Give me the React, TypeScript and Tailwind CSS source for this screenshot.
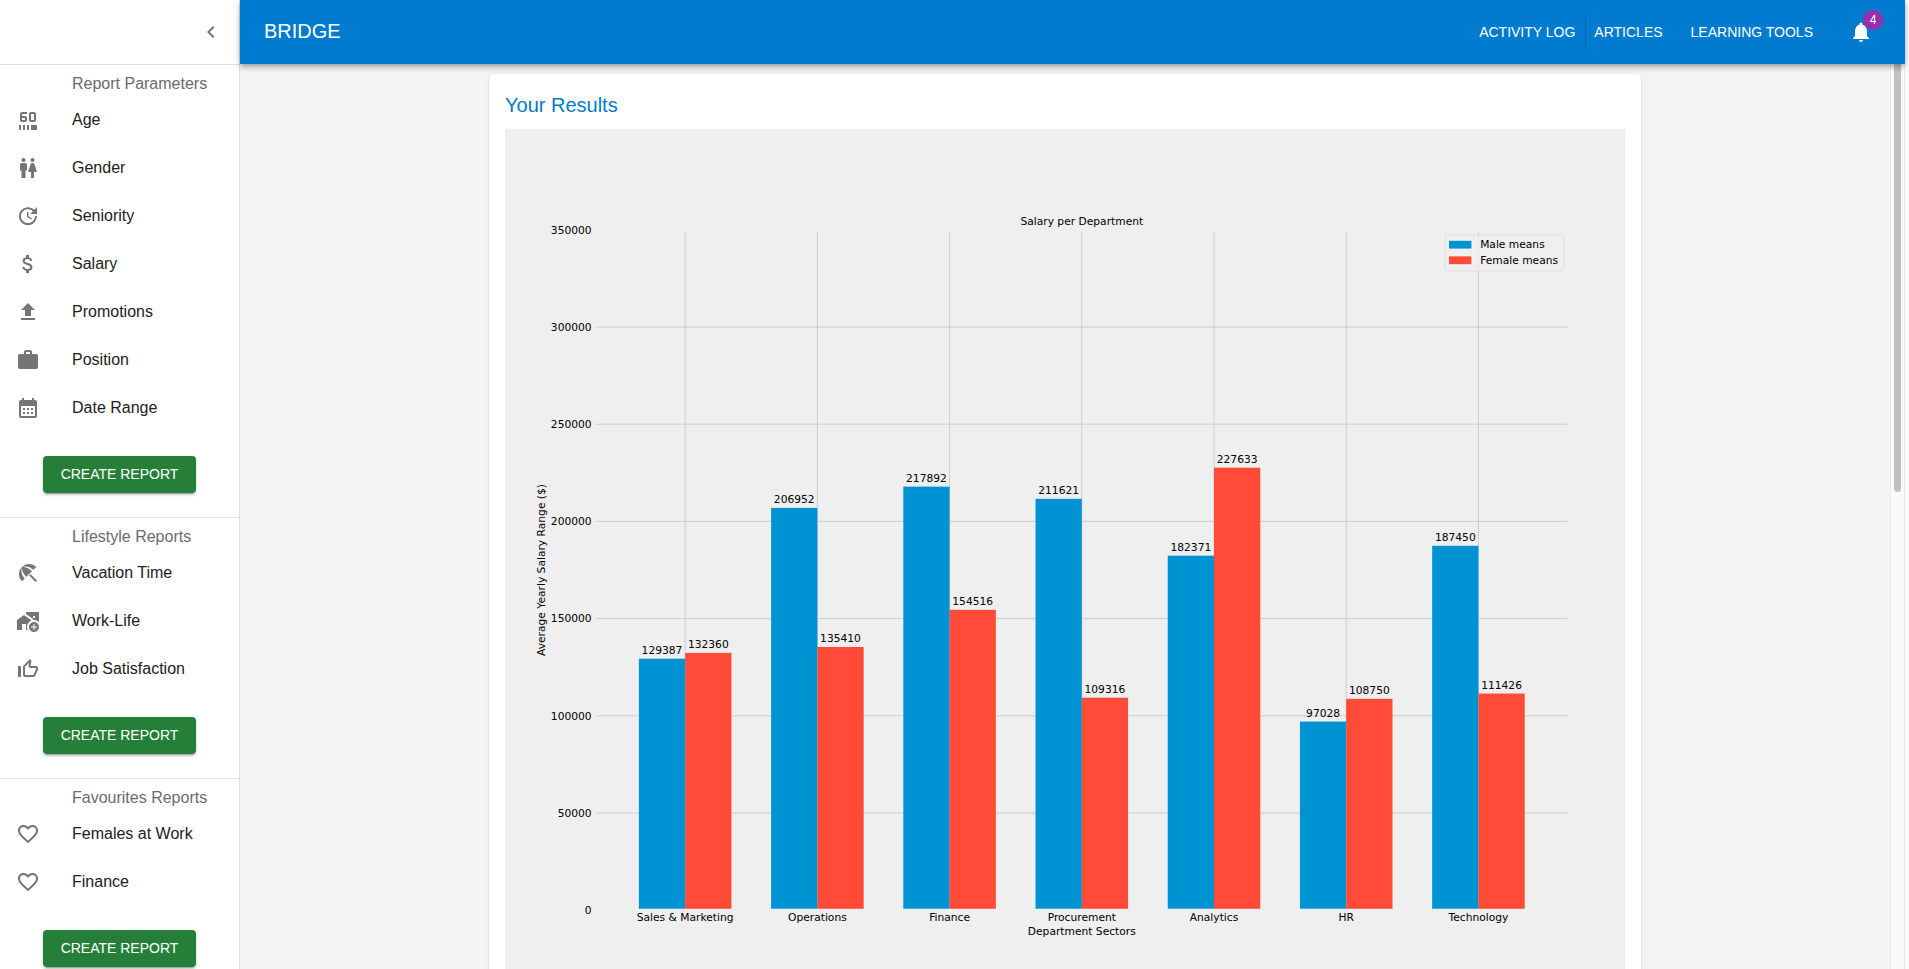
import React from "react";
import { IconType } from "react-icons";
import {
    Md60FpsSelect,
    MdAddHomeWork,
    MdAttachMoney,
    MdBeachAccess,
    MdCalendarMonth,
    MdChevronLeft,
    MdFavoriteBorder,
    MdFileUpload,
    MdNotifications,
    MdThumbUpOffAlt,
    MdUpdate,
    MdWc,
    MdWork,
} from "react-icons/md";

interface ReportItem {
    label: string;
    icon: IconType;
}

interface ReportSection {
    title: string;
    items: ReportItem[];
}

interface Department {
    name: string;
    male: number;
    female: number;
}

const sections: ReportSection[] = [
    {
        title: "Report Parameters",
        items: [
            { label: "Age", icon: Md60FpsSelect },
            { label: "Gender", icon: MdWc },
            { label: "Seniority", icon: MdUpdate },
            { label: "Salary", icon: MdAttachMoney },
            { label: "Promotions", icon: MdFileUpload },
            { label: "Position", icon: MdWork },
            { label: "Date Range", icon: MdCalendarMonth },
        ],
    },
    {
        title: "Lifestyle Reports",
        items: [
            { label: "Vacation Time", icon: MdBeachAccess },
            { label: "Work-Life", icon: MdAddHomeWork },
            { label: "Job Satisfaction", icon: MdThumbUpOffAlt },
        ],
    },
    {
        title: "Favourites Reports",
        items: [
            { label: "Females at Work", icon: MdFavoriteBorder },
            { label: "Finance", icon: MdFavoriteBorder },
        ],
    },
];

const departments: Department[] = [
    { name: "Sales & Marketing", male: 129387, female: 132360 },
    { name: "Operations", male: 206952, female: 135410 },
    { name: "Finance", male: 217892, female: 154516 },
    { name: "Procurement", male: 211621, female: 109316 },
    { name: "Analytics", male: 182371, female: 227633 },
    { name: "HR", male: 97028, female: 108750 },
    { name: "Technology", male: 187450, female: 111426 },
];

const MALE = "#0093d3";
const FEMALE = "#ff4b37";
const GRID = "#cbcbcb";
const CHART_BG = "#efefef";

// Chart geometry, in points
const CHART_WIDTH = 1152;
const CHART_HEIGHT = 864;
const LEFT = CHART_WIDTH * 0.08;
const RIGHT = CHART_WIDTH * 0.95;
const TOP = CHART_HEIGHT * 0.12;
const BOTTOM = CHART_HEIGHT * 0.93;
const Y_MAX = 350000;
const BAR = 0.35;
const UNIT = (RIGHT - LEFT) / ((departments.length - 1 + BAR * 2) * 1.1);
const FIRST = (LEFT + RIGHT - UNIT * (departments.length - 1)) / 2;

const xAt = (index: number) => FIRST + index * UNIT;
const yAt = (value: number) => BOTTOM - (value / Y_MAX) * (BOTTOM - TOP);
const ticks = [0, 50000, 100000, 150000, 200000, 250000, 300000, 350000];

const Bar: React.FC<{ x: number; value: number; color: string }> = ({ x, value, color }) => (
    <g>
        <rect x={x} y={yAt(value)} width={BAR * UNIT} height={BOTTOM - yAt(value)} fill={color} />
        <text x={x + (BAR * UNIT) / 2} y={yAt(value) - 5} textAnchor="middle">
            {value}
        </text>
    </g>
);

const SalaryChart: React.FC = () => (
    <svg
        viewBox={`0 0 ${CHART_WIDTH} ${CHART_HEIGHT}`}
        className="block w-full font-['DejaVu_Sans',sans-serif]"
        fontSize={11}
        role="img"
        aria-labelledby="chart-title"
    >
        <rect width={CHART_WIDTH} height={CHART_HEIGHT} fill={CHART_BG} />

        {/* Grid */}
        {ticks.map((tick) => (
            <line key={tick} x1={LEFT} x2={RIGHT} y1={yAt(tick)} y2={yAt(tick)} stroke={GRID} />
        ))}
        {departments.map((department, i) => (
            <line key={department.name} x1={xAt(i)} x2={xAt(i)} y1={TOP} y2={BOTTOM} stroke={GRID} />
        ))}

        {departments.map((department, i) => (
            <g key={department.name}>
                <Bar x={xAt(i) - BAR * UNIT} value={department.male} color={MALE} />
                <Bar x={xAt(i)} value={department.female} color={FEMALE} />
                <text x={xAt(i)} y={815} textAnchor="middle">
                    {department.name}
                </text>
            </g>
        ))}
        <rect
            x={LEFT}
            y={TOP}
            width={RIGHT - LEFT}
            height={BOTTOM - TOP}
            fill="none"
            stroke={CHART_BG}
            strokeWidth={3}
        />

        {ticks.map((tick) => (
            <text key={tick} x={LEFT - 3} y={yAt(tick) + 4} textAnchor="end">
                {tick}
            </text>
        ))}
        <text id="chart-title" x={(LEFT + RIGHT) / 2} y={99} textAnchor="middle">
            Salary per Department
        </text>
        <text x={(LEFT + RIGHT) / 2} y={829} textAnchor="middle">
            Department Sectors
        </text>
        <text transform={`translate(41 ${(TOP + BOTTOM) / 2}) rotate(-90)`} textAnchor="middle">
            Average Yearly Salary Range ($)
        </text>

        {/* Legend */}
        <rect x={967} y={109} width={122} height={37} rx={2} fill={CHART_BG} fillOpacity={0.8} stroke="#dfdfdf" />
        <rect x={971} y={115} width={23} height={8} fill={MALE} />
        <text x={1003} y={122}>
            Male means
        </text>
        <rect x={971} y={131} width={23} height={8} fill={FEMALE} />
        <text x={1003} y={139}>
            Female means
        </text>
    </svg>
);

const Sidebar: React.FC = () => (
    <aside className="w-60 shrink-0 overflow-hidden border-r border-[#dfdfdf] bg-white">
        <div className="flex h-16 items-center justify-end px-2">
            <button type="button" aria-label="Collapse menu" className="p-2 text-[#757575]">
                <MdChevronLeft size={24} />
            </button>
        </div>
        {sections.map((section) => (
            <section key={section.title} className="border-t border-[#dfdfdf]">
                <h2 className="h-[31px] pl-[72px] text-base leading-[38px] text-[#6b6b6b]">{section.title}</h2>
                <ul>
                    {section.items.map(({ label, icon: Icon }) => (
                        <li key={label}>
                            <button type="button" className="flex h-12 w-full items-center gap-8 px-4 text-left">
                                <Icon size={24} className="shrink-0 text-[#757575]" />
                                <span className="text-base text-[#212121]">{label}</span>
                            </button>
                        </li>
                    ))}
                </ul>
                <div className="flex justify-center py-6">
                    <button
                        type="button"
                        className="h-[37px] rounded bg-[#267f39] px-[18px] pb-0.5 text-sm text-white shadow-[0_3px_1px_-2px_rgba(0,0,0,0.2),0_2px_2px_0_rgba(0,0,0,0.14),0_1px_5px_0_rgba(0,0,0,0.12)]"
                    >
                        CREATE REPORT
                    </button>
                </div>
            </section>
        ))}
    </aside>
);

const Header: React.FC = () => (
    <header className="relative z-10 flex h-16 shrink-0 items-center justify-between bg-[#007bcf] px-6 text-white shadow-[0_2px_4px_-1px_rgba(0,0,0,0.2),0_4px_5px_0_rgba(0,0,0,0.14),0_1px_10px_0_rgba(0,0,0,0.12)]">
        <h1 className="pb-0.5 text-xl">BRIDGE</h1>
        <nav className="flex items-center text-sm">
            <a href="#activity" className="border-r border-[#0069b3] py-2 pr-[10px]">
                ACTIVITY LOG
            </a>
            <a href="#articles" className="py-2 pl-2 pr-7">
                ARTICLES
            </a>
            <a href="#learning" className="py-2">
                LEARNING TOOLS
            </a>
            <button type="button" aria-label="Notifications, 4 unread" className="relative ml-9 mr-2">
                <MdNotifications size={24} />
                <span className="absolute -top-[10px] left-[14px] flex size-5 items-center justify-center rounded-full bg-[#9c2fae] text-xs">
                    4
                </span>
            </button>
        </nav>
    </header>
);

const App: React.FC = () => {
    return (
        <div className="flex h-screen overflow-hidden bg-[#fafafa] pr-1 font-['Liberation_Sans',Arial,sans-serif]">
            <Sidebar />
            <div className="flex min-w-0 flex-1 flex-col">
                <Header />
                <div className="flex min-h-0 flex-1">
                    <main className="min-w-0 flex-1 overflow-hidden bg-[#f4f4f4]">
                        <div className="mx-auto max-w-[1200px] px-6 pt-[10px]">
                            <div className="rounded bg-white p-4 shadow-[0_2px_1px_-1px_rgba(0,0,0,0.2),0_1px_1px_0_rgba(0,0,0,0.14),0_1px_3px_0_rgba(0,0,0,0.12)]">
                                <h2 className="mb-2 text-xl leading-[31px] text-[#007bcf]">Your Results</h2>
                                <SalaryChart />
                            </div>
                        </div>
                    </main>
                    {/* Scroll track */}
                    <div className="w-[15px] shrink-0 border-x border-[#e8e8e8] bg-[#fafafa] px-[3px]">
                        <div className="h-[428px] rounded-b-full bg-[#c1c1c1]" />
                    </div>
                </div>
            </div>
        </div>
    );
};

export default App;
